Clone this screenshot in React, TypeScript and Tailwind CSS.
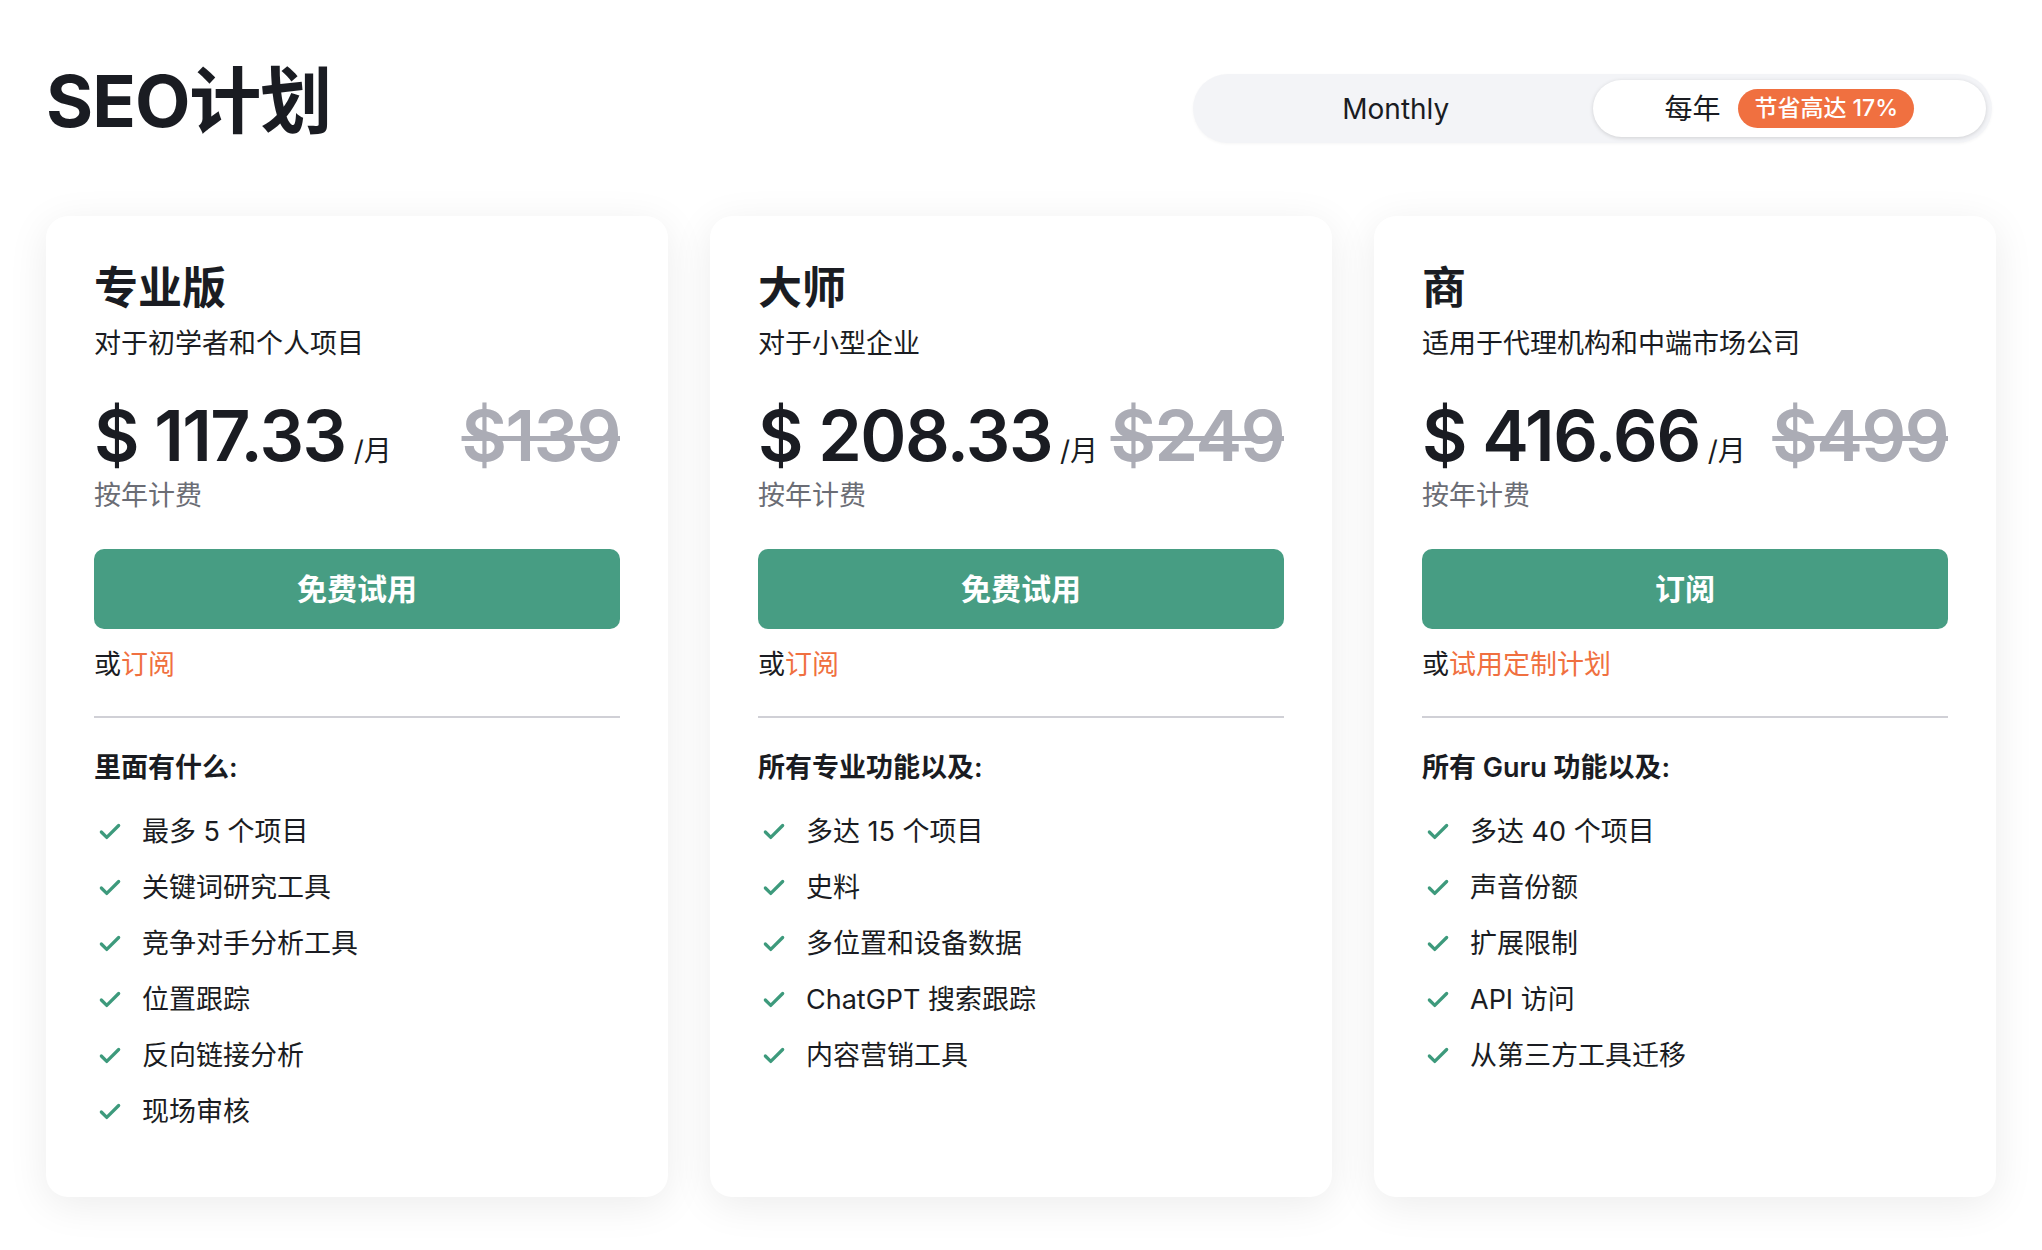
import React from "react";
import { Check } from "lucide-react";

const font = { fontFamily: 'Inter, "Noto Sans CJK SC", sans-serif' };

type Plan = {
  name: string; sub: string; price: string; old: string; btn: string;
  or: string; heading: string; features: string[];
};

const plans: Plan[] = [
  { name: "专业版", sub: "对于初学者和个人项目", price: "$ 117.33", old: "$139", btn: "免费试用", or: "订阅", heading: "里面有什么:",
    features: ["最多 5 个项目", "关键词研究工具", "竞争对手分析工具", "位置跟踪", "反向链接分析", "现场审核"] },
  { name: "大师", sub: "对于小型企业", price: "$ 208.33", old: "$249", btn: "免费试用", or: "订阅", heading: "所有专业功能以及:",
    features: ["多达 15 个项目", "史料", "多位置和设备数据", "ChatGPT 搜索跟踪", "内容营销工具"] },
  { name: "商", sub: "适用于代理机构和中端市场公司", price: "$ 416.66", old: "$499", btn: "订阅", or: "试用定制计划", heading: "所有 Guru 功能以及:",
    features: ["多达 40 个项目", "声音份额", "扩展限制", "API 访问", "从第三方工具迁移"] },
];

function Card({ p }: { p: Plan }) {
  return (
    <div className="flex-1 h-[981px] bg-white rounded-[22px] px-[48px] pt-[46px] shadow-[0_8px_40px_rgba(0,0,0,0.08)] flex flex-col">
      <div className="text-[44px] leading-[52px] font-bold text-[#1a1c22]">{p.name}</div>
      <div className="mt-[12px] text-[27px] leading-[36px] text-[#1a1c22]">{p.sub}</div>
      <div className="mt-[34px] h-[80px] flex items-center justify-between">
        <div className="flex items-baseline">
          <span className="text-[70px] font-semibold tracking-[-1.5px] text-[#1a1c22] leading-[80px]">{p.price}</span>
          <span className="ml-[8px] text-[28px] text-[#1a1c22]">/月</span>
        </div>
        <span className="text-[70px] font-semibold tracking-[-1.5px] text-[#abacb5] line-through decoration-[5px] leading-[80px]">{p.old}</span>
      </div>
      <div className="mt-[2px] text-[27px] leading-[36px] text-[#6b6d75]">按年计费</div>
      <button className="mt-[35px] h-[80px] rounded-[10px] bg-[#479d83] text-white text-[30px] font-bold">{p.btn}</button>
      <div className="mt-[18px] text-[27px] leading-[36px] text-[#1a1c22]">或<span className="text-[#f07040]">{p.or}</span></div>
      <div className="mt-[33px] h-[2px] bg-[#d0d0d6]" />
      <div className="mt-[32px] text-[27px] leading-[36px] font-semibold text-[#1a1c22]">{p.heading}</div>
      <div className="mt-[18px] flex flex-col">
        {p.features.map((f) => (
          <div key={f} className="h-[56px] flex items-center">
            <Check className="w-[26px] h-[26px] ml-[3px] text-[#3d9a7c]" strokeWidth={3} />
            <span className="ml-[19px] text-[27px] text-[#1a1c22]">{f}</span>
          </div>
        ))}
      </div>
    </div>
  );
}

export default function App() {
  return (
    <div className="w-[2042px] h-[1250px] bg-white px-[46px] pt-[65px]" style={font}>
      <div className="flex justify-between items-start pr-[4px]">
        <div className="text-[72px] leading-[72px] font-bold text-[#1a1c22] tracking-[-1px]">SEO计划</div>
        <div className="mt-[9px] w-[799px] h-[69px] rounded-full bg-[#f3f4f7] p-[6px] flex shadow-[0_1px_3px_rgba(0,0,0,0.04)]">
          <div className="flex-1 flex items-center justify-center text-[28px] text-[#1a1c22]">Monthly</div>
          <div className="flex-1 rounded-full bg-white shadow-[0_1px_4px_rgba(0,0,0,0.15)] flex items-center justify-center gap-[18px]">
            <span className="text-[28px] text-[#1a1c22]">每年</span>
            <span className="h-[39px] px-[16px] rounded-full bg-[#f07040] text-white text-[23px] font-medium flex items-center">节省高达 17%</span>
          </div>
        </div>
      </div>
      <div className="mt-[73px] flex gap-[42px]">
        {plans.map((p) => <Card key={p.name} p={p} />)}
      </div>
    </div>
  );
}
